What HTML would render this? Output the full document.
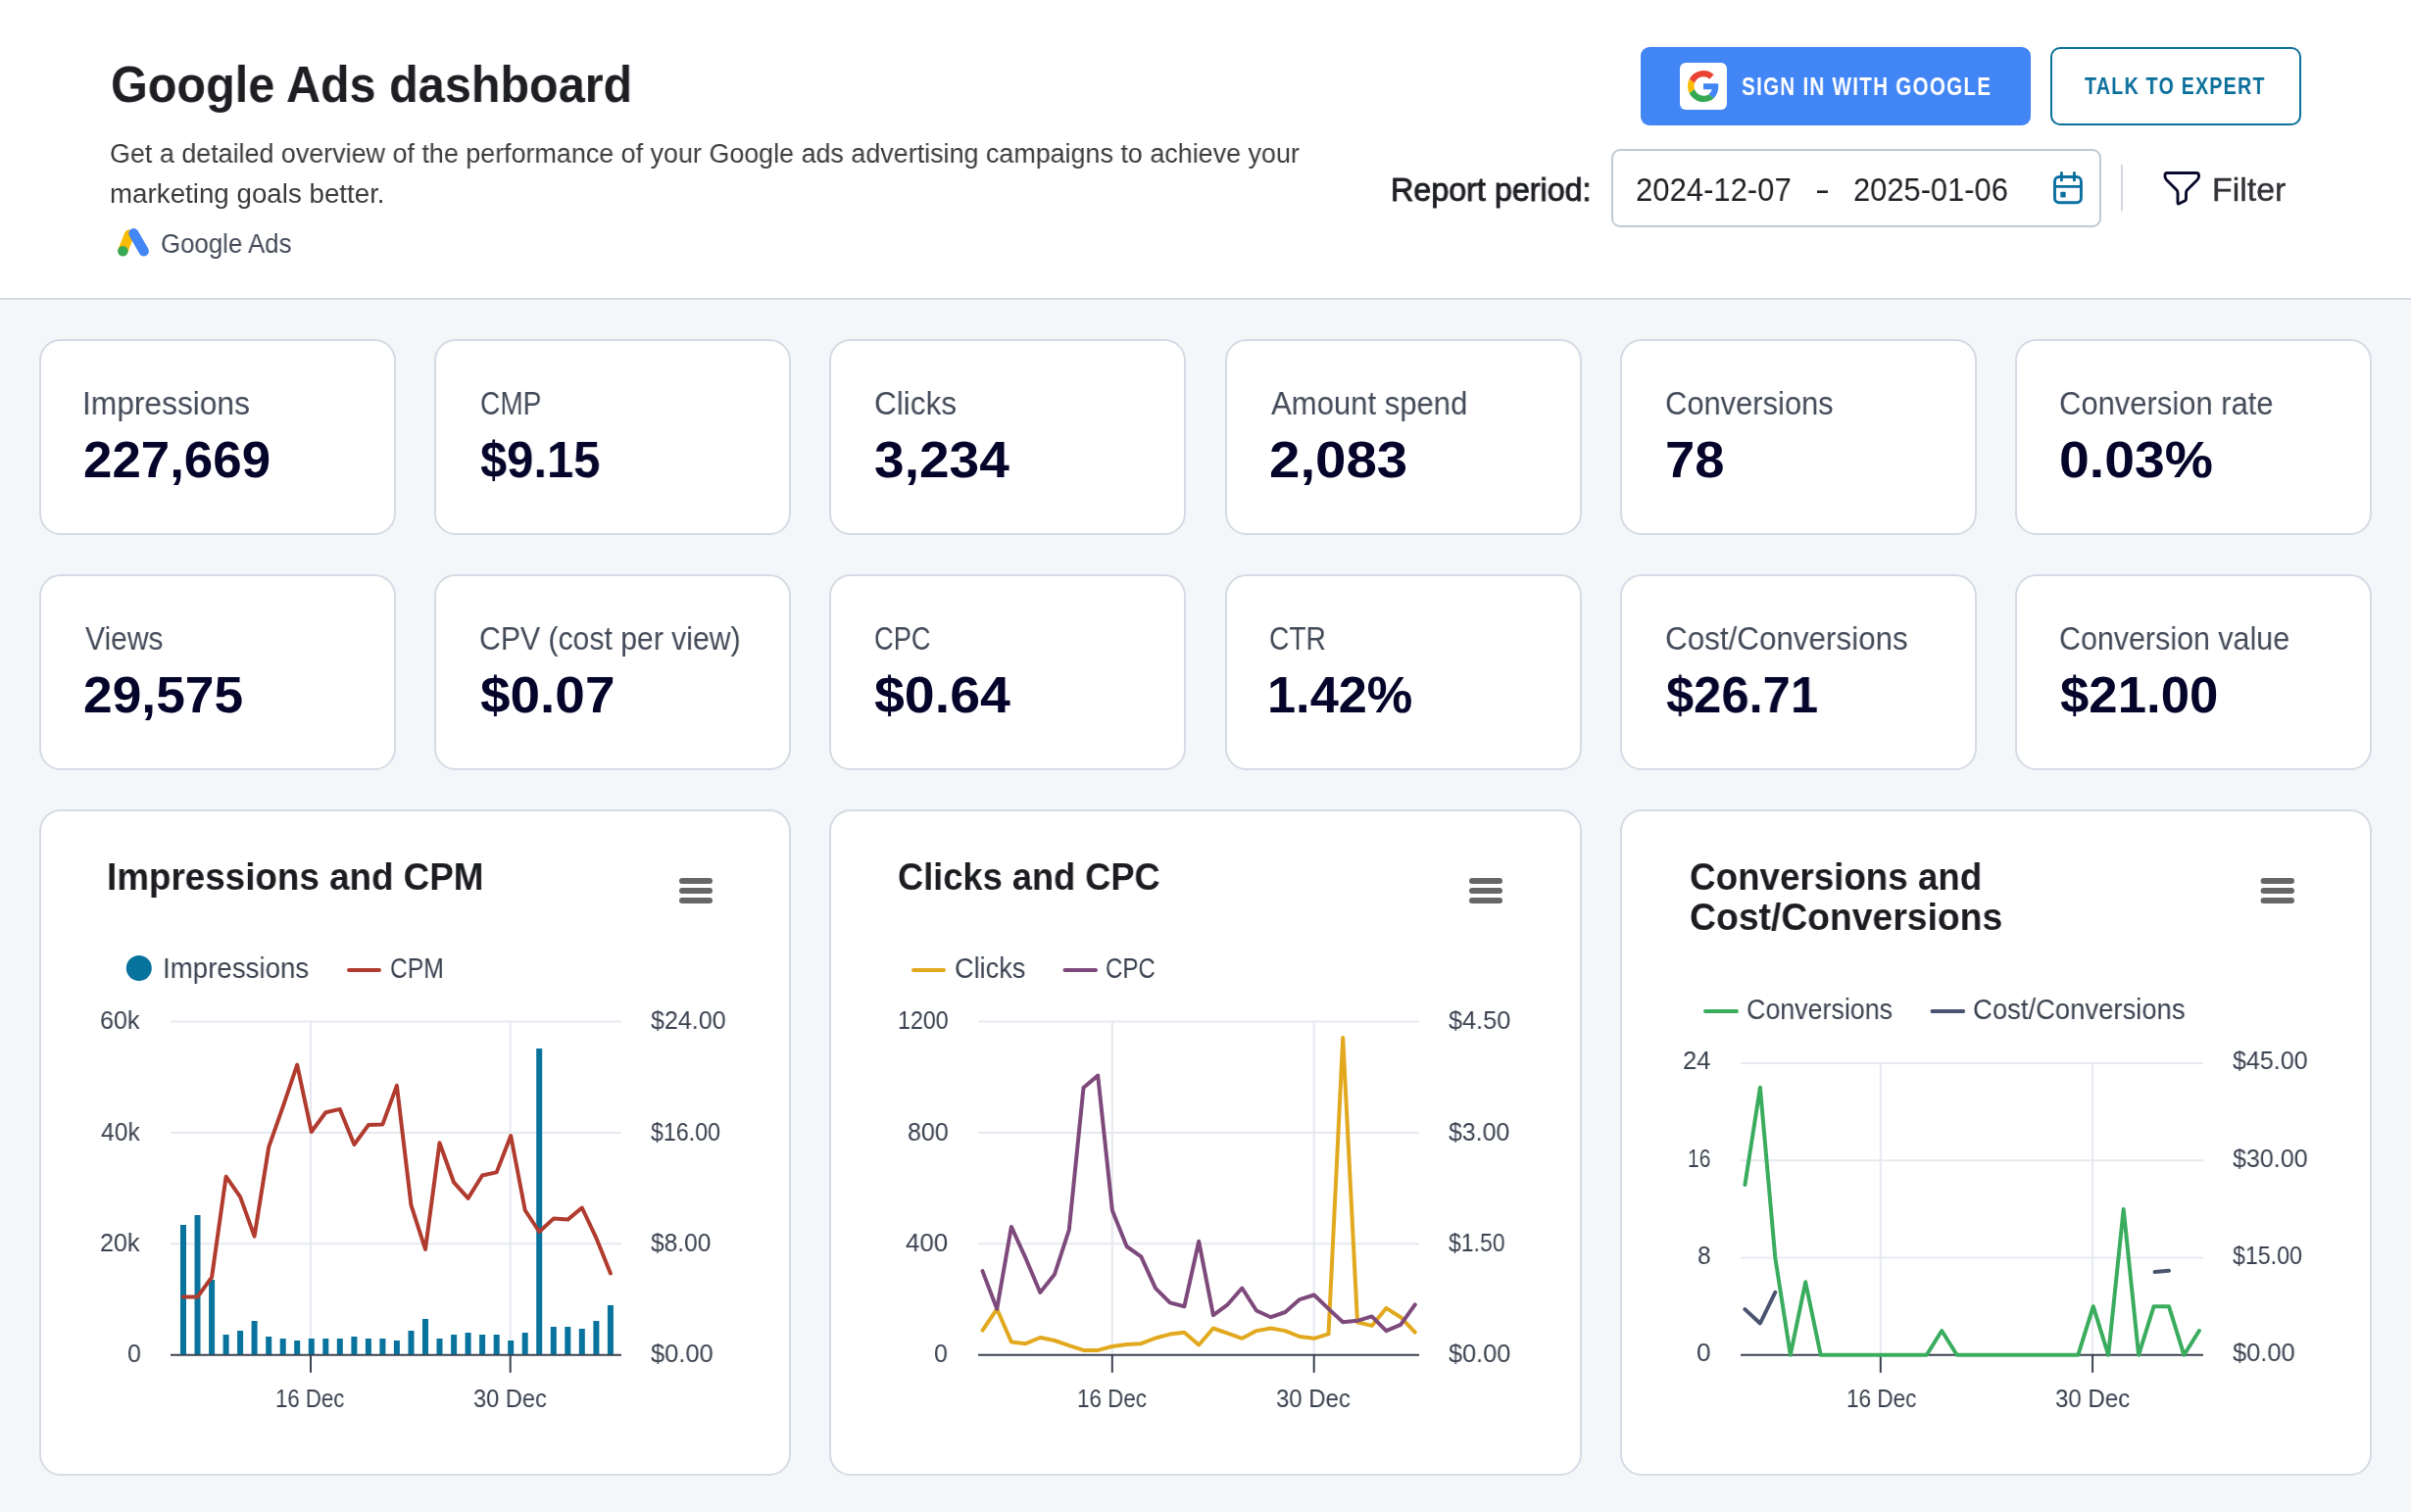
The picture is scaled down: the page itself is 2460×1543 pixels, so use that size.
<!DOCTYPE html>
<html><head><meta charset="utf-8"><title>Google Ads dashboard</title>
<style>
html,body{margin:0;padding:0;width:2460px;height:1543px;overflow:hidden;background:#f3f7fa;font-family:"Liberation Sans",sans-serif}
.t{position:absolute;white-space:nowrap;transform-origin:0 0;will-change:transform}
.card{position:absolute;background:#fff;border:2px solid #d6dae4;border-radius:22px}
svg{overflow:visible}
</style></head><body>
<div style="position:absolute;left:0;top:0;width:2460px;height:304px;background:#fff;border-bottom:2px solid #d6dae3"></div>
<div class="t" style="left:113.06px;top:60.50px;font-size:51.74px;line-height:51.74px;color:#1e1f23;font-weight:700;transform:scaleX(0.9384);">Google Ads dashboard</div>
<div class="t" style="left:111.96px;top:143.12px;font-size:27.62px;line-height:27.62px;color:#3c3c3c;transform:scaleX(0.9740);">Get a detailed overview of the performance of your Google ads advertising campaigns to achieve your</div>
<div class="t" style="left:111.50px;top:183.72px;font-size:27.62px;line-height:27.62px;color:#3c3c3c;transform:scaleX(1.0045);">marketing goals better.</div>
<svg style="position:absolute;left:0;top:0" width="200" height="300"><line x1="132" y1="239.5" x2="125.4" y2="256" stroke="#fbbc04" stroke-width="10.2" stroke-linecap="round"/><line x1="136.4" y1="238.2" x2="146.8" y2="256.4" stroke="#4285f4" stroke-width="10.2" stroke-linecap="round"/><circle cx="125.4" cy="256.2" r="5.3" fill="#34a853"/></svg>
<div class="t" style="left:164.21px;top:235.22px;font-size:27.62px;line-height:27.62px;color:#414856;transform:scaleX(0.9349);">Google Ads</div>
<div style="position:absolute;left:1674px;top:48px;width:398px;height:80px;background:#4285f4;border-radius:9px"></div>
<div style="position:absolute;left:1714px;top:64px;width:48px;height:48px;background:#fff;border-radius:6px"></div>
<svg style="position:absolute;left:1722px;top:72px" width="32" height="32" viewBox="0 0 48 48"><path fill="#EA4335" d="M24 9.5c3.54 0 6.71 1.22 9.21 3.6l6.85-6.85C35.9 2.38 30.47 0 24 0 14.62 0 6.51 5.38 2.56 13.22l7.98 6.19C12.43 13.72 17.74 9.5 24 9.5z"/><path fill="#4285F4" d="M46.98 24.55c0-1.57-.15-3.09-.38-4.55H24v9.02h12.94c-.58 2.96-2.26 5.48-4.78 7.18l7.73 6c4.51-4.18 7.09-10.36 7.09-17.650z"/><path fill="#FBBC05" d="M10.53 28.59c-.48-1.45-.76-2.99-.76-4.59s.27-3.14.76-4.59l-7.98-6.19C.92 16.460 0 20.12 0 24c0 3.88.92 7.54 2.56 10.78l7.97-6.19z"/><path fill="#34A853" d="M24 48c6.48 0 11.930-2.13 15.89-5.81l-7.73-6c-2.15 1.45-4.92 2.3-8.16 2.3-6.26 0-11.57-4.22-13.47-9.91l-7.98 6.19C6.51 42.62 14.62 48 24 48z"/></svg>
<div class="t" style="left:1776.98px;top:75.69px;font-size:25.29px;line-height:25.29px;color:#ffffff;font-weight:700;letter-spacing:1.52px;transform:scaleX(0.8165);">SIGN IN WITH GOOGLE</div>
<div style="position:absolute;left:2092px;top:48px;width:252px;height:76px;border:2px solid #0b6f9b;border-radius:10px;background:#fff"></div>
<div class="t" style="left:2126.80px;top:75.98px;font-size:24.71px;line-height:24.71px;color:#0b6f9b;font-weight:700;letter-spacing:1.48px;transform:scaleX(0.7990);">TALK TO EXPERT</div>
<div class="t" style="left:1418.94px;top:177.07px;font-size:32.99px;line-height:32.99px;color:#1e2024;transform:scaleX(0.9788);-webkit-text-stroke:0.9px #1e2024;">Report period:</div>
<div style="position:absolute;left:1644px;top:152px;width:496px;height:76px;border:2px solid #bfcad1;border-radius:9px;background:#fff"></div>
<div class="t" style="left:1668.85px;top:177.07px;font-size:32.99px;line-height:32.99px;color:#1e2024;transform:scaleX(0.9404);">2024-12-07</div>
<div class="t" style="left:1851.98px;top:177.07px;font-size:32.99px;line-height:32.99px;color:#1e2024;transform:scaleX(1.3608);">-</div>
<div class="t" style="left:1891.46px;top:177.07px;font-size:32.99px;line-height:32.99px;color:#1e2024;transform:scaleX(0.9354);">2025-01-06</div>
<svg style="position:absolute;left:0;top:0" width="2460" height="300"><g fill="none" stroke="#0b70a0" stroke-width="2.9" stroke-linecap="round"><rect x="2096.5" y="180.5" width="26.9" height="26.3" rx="4.5"/><line x1="2103.4" y1="176.5" x2="2103.4" y2="184"/><line x1="2116.4" y1="176.5" x2="2116.4" y2="184"/><line x1="2096.5" y1="190.4" x2="2123.4" y2="190.4"/></g><rect x="2102.3" y="195.8" width="5.4" height="5.8" rx="1" fill="#0b70a0"/>
<path d="M2211,176.5 H2241 Q2243.5,176.5 2243.5,179 V180 Q2243.5,182 2242,183.5 L2231.5,194 Q2230.5,195 2230.5,197 V203 Q2230.5,204.5 2229,205 L2223.5,207.8 Q2222,208.5 2222,207 V197 Q2222,195 2221,194 L2210.5,183.5 Q2209,182 2209,180 V179 Q2209,176.5 2211,176.5 Z" fill="none" stroke="#0a0a2c" stroke-width="2.9" stroke-linejoin="round"/>
<rect x="2164" y="168" width="2" height="47.5" fill="#d3d6e2"/></svg>
<div class="t" style="left:2256.70px;top:177.82px;font-size:32.70px;line-height:32.70px;color:#333438;transform:scaleX(1.0360);-webkit-text-stroke:0.4px #333438;">Filter</div>
<div class="card" style="left:40.00px;top:346px;width:360.00px;height:196px"></div>
<div class="t" style="left:84.37px;top:395.00px;font-size:33.43px;line-height:33.43px;color:#434a58;transform:scaleX(0.9487);">Impressions</div>
<div class="t" style="left:85.45px;top:442.71px;font-size:52.33px;line-height:52.33px;color:#05042a;font-weight:700;transform:scaleX(1.0099);">227,669</div>
<div class="card" style="left:443.20px;top:346px;width:360.00px;height:196px"></div>
<div class="t" style="left:489.50px;top:395.00px;font-size:33.43px;line-height:33.43px;color:#434a58;transform:scaleX(0.8395);">CMP</div>
<div class="t" style="left:490.29px;top:442.71px;font-size:52.33px;line-height:52.33px;color:#05042a;font-weight:700;transform:scaleX(0.9352);">$9.15</div>
<div class="card" style="left:846.40px;top:346px;width:360.00px;height:196px"></div>
<div class="t" style="left:891.53px;top:395.00px;font-size:33.43px;line-height:33.43px;color:#434a58;transform:scaleX(0.9417);">Clicks</div>
<div class="t" style="left:891.86px;top:442.71px;font-size:52.33px;line-height:52.33px;color:#05042a;font-weight:700;transform:scaleX(1.0532);">3,234</div>
<div class="card" style="left:1249.60px;top:346px;width:360.00px;height:196px"></div>
<div class="t" style="left:1296.62px;top:395.00px;font-size:33.43px;line-height:33.43px;color:#434a58;transform:scaleX(0.9294);">Amount spend</div>
<div class="t" style="left:1294.72px;top:442.71px;font-size:52.33px;line-height:52.33px;color:#05042a;font-weight:700;transform:scaleX(1.0787);">2,083</div>
<div class="card" style="left:1652.80px;top:346px;width:360.00px;height:196px"></div>
<div class="t" style="left:1699.46px;top:395.00px;font-size:33.43px;line-height:33.43px;color:#434a58;transform:scaleX(0.9238);">Conversions</div>
<div class="t" style="left:1698.69px;top:442.71px;font-size:52.33px;line-height:52.33px;color:#05042a;font-weight:700;transform:scaleX(1.0389);">78</div>
<div class="card" style="left:2056.00px;top:346px;width:360.00px;height:196px"></div>
<div class="t" style="left:2101.35px;top:395.00px;font-size:33.43px;line-height:33.43px;color:#434a58;transform:scaleX(0.9264);">Conversion rate</div>
<div class="t" style="left:2100.69px;top:442.71px;font-size:52.33px;line-height:52.33px;color:#05042a;font-weight:700;transform:scaleX(1.0577);">0.03%</div>
<div class="card" style="left:40.00px;top:586px;width:360.00px;height:196px"></div>
<div class="t" style="left:87.15px;top:635.00px;font-size:33.43px;line-height:33.43px;color:#434a58;transform:scaleX(0.8982);">Views</div>
<div class="t" style="left:85.43px;top:682.71px;font-size:52.33px;line-height:52.33px;color:#05042a;font-weight:700;transform:scaleX(1.0190);">29,575</div>
<div class="card" style="left:443.20px;top:586px;width:360.00px;height:196px"></div>
<div class="t" style="left:489.39px;top:635.00px;font-size:33.43px;line-height:33.43px;color:#434a58;transform:scaleX(0.9027);">CPV (cost per view)</div>
<div class="t" style="left:490.21px;top:682.71px;font-size:52.33px;line-height:52.33px;color:#05042a;font-weight:700;transform:scaleX(1.0495);">$0.07</div>
<div class="card" style="left:846.40px;top:586px;width:360.00px;height:196px"></div>
<div class="t" style="left:891.74px;top:635.00px;font-size:33.43px;line-height:33.43px;color:#434a58;transform:scaleX(0.8139);">CPC</div>
<div class="t" style="left:892.41px;top:682.71px;font-size:52.33px;line-height:52.33px;color:#05042a;font-weight:700;transform:scaleX(1.0605);">$0.64</div>
<div class="card" style="left:1249.60px;top:586px;width:360.00px;height:196px"></div>
<div class="t" style="left:1295.29px;top:635.00px;font-size:33.43px;line-height:33.43px;color:#434a58;transform:scaleX(0.8420);">CTR</div>
<div class="t" style="left:1293.43px;top:682.71px;font-size:52.33px;line-height:52.33px;color:#05042a;font-weight:700;">1.42%</div>
<div class="card" style="left:1652.80px;top:586px;width:360.00px;height:196px"></div>
<div class="t" style="left:1699.43px;top:635.00px;font-size:33.43px;line-height:33.43px;color:#434a58;transform:scaleX(0.9391);">Cost/Conversions</div>
<div class="t" style="left:1700.37px;top:682.71px;font-size:52.33px;line-height:52.33px;color:#05042a;font-weight:700;transform:scaleX(0.9690);">$26.71</div>
<div class="card" style="left:2056.00px;top:586px;width:360.00px;height:196px"></div>
<div class="t" style="left:2101.38px;top:635.00px;font-size:33.43px;line-height:33.43px;color:#434a58;transform:scaleX(0.9104);">Conversion value</div>
<div class="t" style="left:2102.24px;top:682.71px;font-size:52.33px;line-height:52.33px;color:#05042a;font-weight:700;transform:scaleX(1.0080);">$21.00</div>
<div class="card" style="left:40.00px;top:826px;width:763.20px;height:676px"></div>
<div class="card" style="left:846.40px;top:826px;width:763.20px;height:676px"></div>
<div class="card" style="left:1652.80px;top:826px;width:763.20px;height:676px"></div>
<div class="t" style="left:108.52px;top:875.52px;font-size:38.37px;line-height:38.37px;color:#1c1d21;font-weight:700;transform:scaleX(0.9593);">Impressions and CPM</div>
<div class="t" style="left:166.44px;top:973.72px;font-size:28.92px;line-height:28.92px;color:#3b4250;transform:scaleX(0.9579);">Impressions</div>
<div class="t" style="left:397.77px;top:973.72px;font-size:28.92px;line-height:28.92px;color:#3b4250;transform:scaleX(0.8509);">CPM</div>
<div class="t" style="left:101.94px;top:1028.08px;font-size:26.60px;line-height:26.60px;color:#3b4250;transform:scaleX(0.9456);">60k</div>
<div class="t" style="left:102.64px;top:1141.58px;font-size:26.60px;line-height:26.60px;color:#3b4250;transform:scaleX(0.9293);">40k</div>
<div class="t" style="left:101.94px;top:1254.98px;font-size:26.60px;line-height:26.60px;color:#3b4250;transform:scaleX(0.9456);">20k</div>
<div class="t" style="left:129.56px;top:1368.48px;font-size:26.60px;line-height:26.60px;color:#3b4250;transform:scaleX(0.9399);">0</div>
<div class="t" style="left:664.15px;top:1028.08px;font-size:26.60px;line-height:26.60px;color:#3b4250;transform:scaleX(0.9430);">$24.00</div>
<div class="t" style="left:664.17px;top:1141.58px;font-size:26.60px;line-height:26.60px;color:#3b4250;transform:scaleX(0.8731);">$16.00</div>
<div class="t" style="left:664.15px;top:1254.98px;font-size:26.60px;line-height:26.60px;color:#3b4250;transform:scaleX(0.9219);">$8.00</div>
<div class="t" style="left:664.15px;top:1368.48px;font-size:26.60px;line-height:26.60px;color:#3b4250;transform:scaleX(0.9571);">$0.00</div>
<div class="t" style="left:280.74px;top:1414.28px;font-size:26.60px;line-height:26.60px;color:#3b4250;transform:scaleX(0.8341);">16 Dec</div>
<div class="t" style="left:482.92px;top:1414.28px;font-size:26.60px;line-height:26.60px;color:#3b4250;transform:scaleX(0.8870);">30 Dec</div>
<div class="t" style="left:915.85px;top:875.52px;font-size:38.37px;line-height:38.37px;color:#1c1d21;font-weight:700;transform:scaleX(0.9442);">Clicks and CPC</div>
<div class="t" style="left:973.84px;top:973.72px;font-size:28.92px;line-height:28.92px;color:#3b4250;transform:scaleX(0.9371);">Clicks</div>
<div class="t" style="left:1128.20px;top:973.72px;font-size:28.92px;line-height:28.92px;color:#3b4250;transform:scaleX(0.8297);">CPC</div>
<div class="t" style="left:915.55px;top:1028.08px;font-size:26.60px;line-height:26.60px;color:#3b4250;transform:scaleX(0.8749);">1200</div>
<div class="t" style="left:925.53px;top:1141.58px;font-size:26.60px;line-height:26.60px;color:#3b4250;transform:scaleX(0.9426);">800</div>
<div class="t" style="left:924.12px;top:1254.98px;font-size:26.60px;line-height:26.60px;color:#3b4250;transform:scaleX(0.9753);">400</div>
<div class="t" style="left:953.46px;top:1368.48px;font-size:26.60px;line-height:26.60px;color:#3b4250;transform:scaleX(0.9399);">0</div>
<div class="t" style="left:1477.85px;top:1028.08px;font-size:26.60px;line-height:26.60px;color:#3b4250;transform:scaleX(0.9510);">$4.50</div>
<div class="t" style="left:1477.85px;top:1141.58px;font-size:26.60px;line-height:26.60px;color:#3b4250;transform:scaleX(0.9357);">$3.00</div>
<div class="t" style="left:1477.87px;top:1254.98px;font-size:26.60px;line-height:26.60px;color:#3b4250;transform:scaleX(0.8652);">$1.50</div>
<div class="t" style="left:1477.85px;top:1368.48px;font-size:26.60px;line-height:26.60px;color:#3b4250;transform:scaleX(0.9510);">$0.00</div>
<div class="t" style="left:1098.52px;top:1414.28px;font-size:26.60px;line-height:26.60px;color:#3b4250;transform:scaleX(0.8415);">16 Dec</div>
<div class="t" style="left:1302.10px;top:1414.28px;font-size:26.60px;line-height:26.60px;color:#3b4250;transform:scaleX(0.8991);">30 Dec</div>
<div class="t" style="left:1723.53px;top:875.52px;font-size:38.37px;line-height:38.37px;color:#1c1d21;font-weight:700;transform:scaleX(0.9585);">Conversions and</div>
<div class="t" style="left:1723.51px;top:917.22px;font-size:38.37px;line-height:38.37px;color:#1c1d21;font-weight:700;transform:scaleX(0.9723);">Cost/Conversions</div>
<div class="t" style="left:1782.06px;top:1015.72px;font-size:28.92px;line-height:28.92px;color:#3b4250;transform:scaleX(0.9274);">Conversions</div>
<div class="t" style="left:2013.03px;top:1015.72px;font-size:28.92px;line-height:28.92px;color:#3b4250;transform:scaleX(0.9494);">Cost/Conversions</div>
<div class="t" style="left:1717.22px;top:1069.48px;font-size:26.60px;line-height:26.60px;color:#3b4250;transform:scaleX(0.9613);">24</div>
<div class="t" style="left:1722.42px;top:1168.78px;font-size:26.60px;line-height:26.60px;color:#3b4250;transform:scaleX(0.7917);">16</div>
<div class="t" style="left:1732.36px;top:1268.08px;font-size:26.60px;line-height:26.60px;color:#3b4250;transform:scaleX(0.9199);">8</div>
<div class="t" style="left:1731.42px;top:1367.28px;font-size:26.60px;line-height:26.60px;color:#3b4250;transform:scaleX(0.9791);">0</div>
<div class="t" style="left:2278.15px;top:1069.48px;font-size:26.60px;line-height:26.60px;color:#3b4250;transform:scaleX(0.9430);">$45.00</div>
<div class="t" style="left:2278.15px;top:1168.78px;font-size:26.60px;line-height:26.60px;color:#3b4250;transform:scaleX(0.9430);">$30.00</div>
<div class="t" style="left:2278.17px;top:1268.08px;font-size:26.60px;line-height:26.60px;color:#3b4250;transform:scaleX(0.8731);">$15.00</div>
<div class="t" style="left:2278.15px;top:1367.28px;font-size:26.60px;line-height:26.60px;color:#3b4250;transform:scaleX(0.9571);">$0.00</div>
<div class="t" style="left:1883.51px;top:1414.28px;font-size:26.60px;line-height:26.60px;color:#3b4250;transform:scaleX(0.8464);">16 Dec</div>
<div class="t" style="left:2096.90px;top:1414.28px;font-size:26.60px;line-height:26.60px;color:#3b4250;transform:scaleX(0.9040);">30 Dec</div>
<svg style="position:absolute;left:0;top:0" width="2460" height="1543">
<line x1="696" y1="899" x2="724" y2="899" stroke="#666" stroke-width="6" stroke-linecap="round"/>
<line x1="696" y1="909" x2="724" y2="909" stroke="#666" stroke-width="6" stroke-linecap="round"/>
<line x1="696" y1="919" x2="724" y2="919" stroke="#666" stroke-width="6" stroke-linecap="round"/>
<circle cx="141.8" cy="988" r="13" fill="#08739d"/>
<line x1="356" y1="990" x2="387" y2="990" stroke="#b03b2e" stroke-width="4" stroke-linecap="round"/>
<line x1="174" y1="1042.4" x2="634" y2="1042.4" stroke="#e6e9f0" stroke-width="2"/>
<line x1="174" y1="1155.9" x2="634" y2="1155.9" stroke="#e6e9f0" stroke-width="2"/>
<line x1="174" y1="1269.3" x2="634" y2="1269.3" stroke="#e6e9f0" stroke-width="2"/>
<line x1="317" y1="1042.4" x2="317" y2="1382.8" stroke="#e6e9f0" stroke-width="2"/>
<line x1="520.7" y1="1042.4" x2="520.7" y2="1382.8" stroke="#e6e9f0" stroke-width="2"/>
<line x1="174" y1="1382.8" x2="634" y2="1382.8" stroke="#3a4250" stroke-width="2"/>
<line x1="317" y1="1382.8" x2="317" y2="1400.8" stroke="#3a4250" stroke-width="2"/>
<line x1="520.7" y1="1382.8" x2="520.7" y2="1400.8" stroke="#3a4250" stroke-width="2"/>
<rect x="184.0" y="1250" width="6" height="132" fill="#08739d"/>
<rect x="198.5" y="1240" width="6" height="142" fill="#08739d"/>
<rect x="213.1" y="1306" width="6" height="76" fill="#08739d"/>
<rect x="227.6" y="1362" width="6" height="20" fill="#08739d"/>
<rect x="242.1" y="1358" width="6" height="24" fill="#08739d"/>
<rect x="256.6" y="1348" width="6" height="34" fill="#08739d"/>
<rect x="271.2" y="1364" width="6" height="18" fill="#08739d"/>
<rect x="285.7" y="1366" width="6" height="16" fill="#08739d"/>
<rect x="300.2" y="1368" width="6" height="14" fill="#08739d"/>
<rect x="314.8" y="1366" width="6" height="16" fill="#08739d"/>
<rect x="329.3" y="1366" width="6" height="16" fill="#08739d"/>
<rect x="343.8" y="1366" width="6" height="16" fill="#08739d"/>
<rect x="358.4" y="1364" width="6" height="18" fill="#08739d"/>
<rect x="372.9" y="1366" width="6" height="16" fill="#08739d"/>
<rect x="387.4" y="1366" width="6" height="16" fill="#08739d"/>
<rect x="401.9" y="1368" width="6" height="14" fill="#08739d"/>
<rect x="416.5" y="1358" width="6" height="24" fill="#08739d"/>
<rect x="431.0" y="1346" width="6" height="36" fill="#08739d"/>
<rect x="445.5" y="1366" width="6" height="16" fill="#08739d"/>
<rect x="460.1" y="1362" width="6" height="20" fill="#08739d"/>
<rect x="474.6" y="1360" width="6" height="22" fill="#08739d"/>
<rect x="489.1" y="1362" width="6" height="20" fill="#08739d"/>
<rect x="503.7" y="1362" width="6" height="20" fill="#08739d"/>
<rect x="518.2" y="1368" width="6" height="14" fill="#08739d"/>
<rect x="532.7" y="1360" width="6" height="22" fill="#08739d"/>
<rect x="547.2" y="1070" width="6" height="312" fill="#08739d"/>
<rect x="561.8" y="1354" width="6" height="28" fill="#08739d"/>
<rect x="576.3" y="1354" width="6" height="28" fill="#08739d"/>
<rect x="590.8" y="1356" width="6" height="26" fill="#08739d"/>
<rect x="605.4" y="1348" width="6" height="34" fill="#08739d"/>
<rect x="619.9" y="1332" width="6" height="50" fill="#08739d"/>
<polyline points="187.0,1323.5 201.5,1323.5 216.1,1303.4 230.6,1200.7 245.1,1221.4 259.6,1261.6 274.2,1170.6 288.7,1129.3 303.2,1086.7 317.8,1155.0 332.3,1135.2 346.8,1131.9 361.4,1168.0 375.9,1148.1 390.4,1147.4 404.9,1107.9 419.5,1229.9 434.0,1275.0 448.5,1166.2 463.1,1206.7 477.6,1222.9 492.1,1199.5 506.7,1196.4 521.2,1159.0 535.7,1235.0 550.2,1257.0 564.8,1243.6 579.3,1244.6 593.8,1232.5 608.4,1263.4 622.9,1299.5" fill="none" stroke="#b03b2e" stroke-width="4" stroke-linejoin="round" stroke-linecap="round"/>
<line x1="1502" y1="899" x2="1530" y2="899" stroke="#666" stroke-width="6" stroke-linecap="round"/>
<line x1="1502" y1="909" x2="1530" y2="909" stroke="#666" stroke-width="6" stroke-linecap="round"/>
<line x1="1502" y1="919" x2="1530" y2="919" stroke="#666" stroke-width="6" stroke-linecap="round"/>
<line x1="932" y1="990" x2="963" y2="990" stroke="#e2a91f" stroke-width="4" stroke-linecap="round"/>
<line x1="1086.5" y1="990" x2="1118" y2="990" stroke="#7e4a7c" stroke-width="4" stroke-linecap="round"/>
<line x1="998" y1="1042.4" x2="1448" y2="1042.4" stroke="#e6e9f0" stroke-width="2"/>
<line x1="998" y1="1155.9" x2="1448" y2="1155.9" stroke="#e6e9f0" stroke-width="2"/>
<line x1="998" y1="1269.3" x2="1448" y2="1269.3" stroke="#e6e9f0" stroke-width="2"/>
<line x1="1134.8" y1="1042.4" x2="1134.8" y2="1382.8" stroke="#e6e9f0" stroke-width="2"/>
<line x1="1340.7" y1="1042.4" x2="1340.7" y2="1382.8" stroke="#e6e9f0" stroke-width="2"/>
<line x1="998" y1="1382.8" x2="1448" y2="1382.8" stroke="#3a4250" stroke-width="2"/>
<line x1="1134.8" y1="1382.8" x2="1134.8" y2="1400.8" stroke="#3a4250" stroke-width="2"/>
<line x1="1340.7" y1="1382.8" x2="1340.7" y2="1400.8" stroke="#3a4250" stroke-width="2"/>
<polyline points="1002.5,1357.7 1017.2,1335.8 1031.9,1369.4 1046.6,1371.2 1061.3,1365.0 1076.0,1368.0 1090.8,1373.2 1105.5,1377.9 1120.2,1377.9 1134.9,1374.0 1149.6,1372.0 1164.3,1371.2 1179.0,1365.5 1193.7,1361.6 1208.4,1359.8 1223.2,1372.5 1237.9,1355.5 1252.6,1360.7 1267.3,1365.8 1282.0,1358.1 1296.7,1355.5 1311.4,1358.1 1326.1,1364.0 1340.8,1365.8 1355.5,1361.4 1370.2,1058.9 1385.0,1349.3 1399.7,1352.9 1414.4,1334.9 1429.1,1344.2 1443.8,1359.6" fill="none" stroke="#e2a91f" stroke-width="4" stroke-linejoin="round" stroke-linecap="round"/>
<polyline points="1002.5,1297.1 1017.2,1335.8 1031.9,1251.9 1046.6,1284.2 1061.3,1319.0 1076.0,1300.5 1090.8,1255.0 1105.5,1110.0 1120.2,1097.6 1134.9,1235.2 1149.6,1272.0 1164.3,1282.4 1179.0,1314.6 1193.7,1329.4 1208.4,1333.2 1223.2,1266.8 1237.9,1342.1 1252.6,1331.3 1267.3,1314.5 1282.0,1337.5 1296.7,1344.2 1311.4,1339.0 1326.1,1326.1 1340.8,1321.5 1355.5,1335.6 1370.2,1349.3 1385.0,1347.8 1399.7,1343.4 1414.4,1358.1 1429.1,1351.9 1443.8,1331.3" fill="none" stroke="#7e4a7c" stroke-width="4" stroke-linejoin="round" stroke-linecap="round"/>
<line x1="2309.6" y1="899" x2="2338" y2="899" stroke="#666" stroke-width="6" stroke-linecap="round"/>
<line x1="2309.6" y1="909" x2="2338" y2="909" stroke="#666" stroke-width="6" stroke-linecap="round"/>
<line x1="2309.6" y1="919" x2="2338" y2="919" stroke="#666" stroke-width="6" stroke-linecap="round"/>
<line x1="1740" y1="1032" x2="1772" y2="1032" stroke="#3aac5e" stroke-width="4" stroke-linecap="round"/>
<line x1="1971.5" y1="1032" x2="2003.2" y2="1032" stroke="#4a5470" stroke-width="4" stroke-linecap="round"/>
<line x1="1776" y1="1085" x2="2248" y2="1085" stroke="#e6e9f0" stroke-width="2"/>
<line x1="1776" y1="1184.3" x2="2248" y2="1184.3" stroke="#e6e9f0" stroke-width="2"/>
<line x1="1776" y1="1283.6" x2="2248" y2="1283.6" stroke="#e6e9f0" stroke-width="2"/>
<line x1="1918.8" y1="1085" x2="1918.8" y2="1382.8" stroke="#e6e9f0" stroke-width="2"/>
<line x1="2135.1" y1="1085" x2="2135.1" y2="1382.8" stroke="#e6e9f0" stroke-width="2"/>
<line x1="1776" y1="1382.8" x2="2248" y2="1382.8" stroke="#3a4250" stroke-width="2"/>
<line x1="1918.8" y1="1382.8" x2="1918.8" y2="1400.8" stroke="#3a4250" stroke-width="2"/>
<line x1="2135.1" y1="1382.8" x2="2135.1" y2="1400.8" stroke="#3a4250" stroke-width="2"/>
<polyline points="1780.4,1209.1 1795.9,1109.8 1811.3,1283.5 1826.8,1382.8 1842.2,1308.3 1857.7,1382.8 1873.1,1382.8 1888.6,1382.8 1904.0,1382.8 1919.5,1382.8 1934.9,1382.8 1950.4,1382.8 1965.8,1382.8 1981.2,1358.0 1996.7,1382.8 2012.2,1382.8 2027.6,1382.8 2043.1,1382.8 2058.5,1382.8 2074.0,1382.8 2089.4,1382.8 2104.8,1382.8 2120.3,1382.8 2135.8,1333.2 2151.2,1382.8 2166.7,1233.9 2182.1,1382.8 2197.6,1333.2 2213.0,1333.2 2228.4,1382.8 2243.9,1358.0" fill="none" stroke="#3aac5e" stroke-width="4" stroke-linejoin="round" stroke-linecap="round"/>
<polyline points="1780.4,1336.1 1795.9,1350.5 1811.3,1318.8" fill="none" stroke="#4a5470" stroke-width="4" stroke-linejoin="round" stroke-linecap="round"/>
<polyline points="2198.6,1298.0 2213.0,1296.8" fill="none" stroke="#4a5470" stroke-width="4" stroke-linejoin="round" stroke-linecap="round"/>
</svg>
</body></html>
